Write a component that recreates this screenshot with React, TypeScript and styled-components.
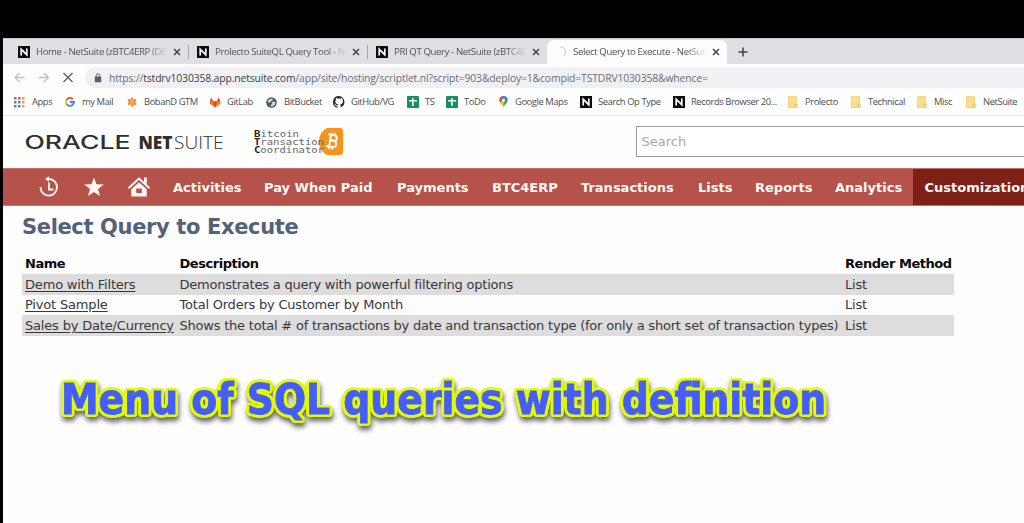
import React from 'react';
import styled, { createGlobalStyle } from 'styled-components';

const Global = createGlobalStyle`
  *, *::before, *::after { box-sizing: border-box; }
  body { margin: 0; background: #000; overflow: hidden; }
`;

const UI = '"Open Sans", "Noto Sans", sans-serif';
const BODY = '"DejaVu Sans", Verdana, sans-serif';

const Screen = styled.div`
  width: 1024px;
  height: 523px;
  padding: 38px 0 0 3px;
  background: #000;
  overflow: hidden;
`;

const Browser = styled.div`
  height: 485px;
  background: #fefefe;
  display: flex;
  flex-direction: column;
  overflow: hidden;
`;

const TabStrip = styled.div`
  flex: none;
  height: 26px;
  display: flex;
  align-items: flex-end;
  background: #dfe0e4;
  border-top: 1px solid #c4c5c8;
  padding-left: 7px;
`;

const Tab = styled.div<{ $active?: boolean; $w: number }>`
  width: ${p => p.$w}px;
  height: 24px;
  display: flex;
  align-items: center;
  padding: 0 7px 1px 8px;
  border-radius: 7px 7px 0 0;
  background: ${p => (p.$active ? '#fdfdfe' : 'transparent')};
`;

const TabTitle = styled.span`
  flex: 1;
  margin: 0 5px 0 6px;
  height: 16px;
  font: 9.6px/16px ${UI};
  letter-spacing: -0.38px;
  color: #505256;
  white-space: nowrap;
  overflow: hidden;
  mask-image: linear-gradient(to right, #000 84%, transparent 100%);
`;

const TabDivider = styled.i`
  width: 1px;
  height: 14px;
  margin: 0 0 5px;
  background: #a3a5aa;
`;

const NewTab = styled.div`
  width: 32px;
  height: 24px;
  display: grid;
  place-items: center;
`;

const Toolbar = styled.div`
  flex: none;
  height: 27px;
  display: flex;
  align-items: center;
  padding-left: 10px;
  background: #fdfdfe;
`;

const NavButton = styled.div<{ $gap: number }>`
  width: 13px;
  height: 13px;
  margin-right: ${p => p.$gap}px;
  svg { display: block; }
`;

const AddressBar = styled.div`
  flex: 1;
  height: 21px;
  display: flex;
  align-items: center;
  padding-left: 9px;
  border-radius: 11px 0 0 11px;
  background: linear-gradient(#f2f2f4 0 50%, #edf1f3 50% 100%);
`;

const Url = styled.span`
  margin-left: 7px;
  font: 10.4px/20px ${UI};
  letter-spacing: -0.15px;
  color: #6c6e72;
  white-space: nowrap;
  b { font-weight: 400; color: #3c3e42; }
`;

const Bookmarks = styled.div`
  flex: none;
  height: 25px;
  display: flex;
  align-items: center;
  border-bottom: 1px solid #e8e8e8;
  padding: 0 0 2px 11px;
`;

const Bookmark = styled.div<{ $w: number; $gap: number }>`
  flex: none;
  width: ${p => p.$w}px;
  display: flex;
  align-items: center;
  gap: ${p => p.$gap}px;
  svg { flex: none; display: block; }
`;

const BookmarkText = styled.span`
  font: 9.4px/16px ${UI};
  letter-spacing: -0.42px;
  color: #4c4e52;
  white-space: nowrap;
`;

const Header = styled.header`
  flex: none;
  height: 52px;
  display: flex;
  align-items: center;
  padding-left: 22px;
`;

const Brand = styled.svg<{ $mr: number }>`
  flex: none;
  margin-right: ${p => p.$mr}px;
`;

const SearchBox = styled.div`
  width: 420px;
  flex: none;
  height: 31px;
  margin-top: -1px;
  border: 1px solid #9b9b9b;
  background: #fff;
  padding-left: 4.5px;
  font: 13px/30px ${BODY};
  color: #a7a7a7;
`;

const Menu = styled.nav`
  flex: none;
  height: 38px;
  display: flex;
  align-items: stretch;
  background: #b5534a;
  border-top: 1px solid #c4736c;
  border-bottom: 1px solid #c4736c;
  padding-left: 35px;
  overflow: hidden;
`;

const MenuIcon = styled.div<{ $w: number }>`
  flex: none;
  width: ${p => p.$w}px;
  display: flex;
  align-items: center;
`;

const MenuItem = styled.div<{ $w: number; $active?: boolean }>`
  flex: none;
  width: ${p => p.$w}px;
  margin: -1px 0;
  padding: 1px 0 0 11.5px;
  background: ${p => (p.$active ? '#7f2017' : 'transparent')};
  color: #fff8f4;
  font: bold 13px/37px ${BODY};
  white-space: nowrap;
`;

const Content = styled.main`
  padding: 8px 0 0 19px;
`;

const Title = styled.h1`
  margin: 0;
  font: bold 21px/26px ${BODY};
  letter-spacing: -0.36px;
  color: #52627a;
  white-space: nowrap;
`;

const Table = styled.div`
  width: 932px;
  margin-top: 14px;
  font: 13px/20px ${BODY};
  color: #383838;
`;

const Row = styled.div<{ $shade?: boolean; $head?: boolean; $h: number }>`
  display: grid;
  grid-template-columns: 154.5px 665.5px 1fr;
  height: ${p => p.$h}px;
  line-height: ${p => p.$h}px;
  padding-left: 3px;
  white-space: nowrap;
  background: ${p => (p.$shade ? '#dddddd' : 'transparent')};
  font-weight: ${p => (p.$head ? 700 : 400)};
  letter-spacing: ${p => (p.$head ? -0.46 : -0.215)}px;
  color: ${p => (p.$head ? '#0a0a0a' : 'inherit')};
`;

const QueryLink = styled.a`
  letter-spacing: -0.18px;
  text-decoration: underline;
  text-underline-offset: 2px;
`;

/* Yellow rim made of shadows on a circle, so it hugs the thickened glyphs. */
const rim = Array.from({ length: 24 }, (_, i) => {
  const a = (i * Math.PI) / 12;
  return `${(Math.cos(a) * 3.1).toFixed(2)}px ${(Math.sin(a) * 3.1).toFixed(2)}px 0 #e2fa05`;
}).join(', ');

const Caption = styled.p`
  margin: 36px 0 0 39px;
  font: bold 42px/56px "DejaVu Sans Condensed", "DejaVu Sans", sans-serif;
  font-stretch: condensed;
  color: #445dfb;
  white-space: nowrap;
  -webkit-text-stroke: 0.8px #445dfb;
  text-shadow: ${rim};
  filter: drop-shadow(1px 4px 2.5px rgba(0, 0, 0, 0.6));
`;

const NLogo = () => (
  <svg width="12" height="12" viewBox="0 0 12 12">
    <rect width="12" height="12" fill="#0b0b0b" />
    <path d="M3.2 9.400V3.300L8.800 8.700V2.600" fill="none" stroke="#fff" strokeWidth="1.700" />
  </svg>
);

const Close = () => (
  <svg width="8" height="8" viewBox="0 0 8 8">
    <path d="M1 1l6 6M7 1L1 7" stroke="#424448" strokeWidth="1.5" />
  </svg>
);

const Spinner = () => (
  <svg width="12" height="12" viewBox="0 0 12 12">
    <path d="M5 1.2A4.9 4.9 0 0 1 9 9.8" fill="none" stroke="#d5d6d9" strokeWidth="1.3" />
  </svg>
);

const AppsIcon = () => {
  const colors = ['#e2574c', '#e2574c', '#e9a13b', '#3f9b5b', '#4a7fd8', '#e9a13b', '#3f9b5b', '#4a7fd8', '#e9a13b'];
  return (
    <svg width="11" height="11" viewBox="0 0 11 11">
      {colors.map((c, i) => (
        <rect key={i} x={(i % 3) * 4} y={Math.floor(i / 3) * 4} width="2.5" height="2.5" fill={c} />
      ))}
    </svg>
  );
};

const GoogleIcon = () => (
  <svg width="10" height="10" viewBox="0 0 10 10" fill="none" strokeWidth="1.8">
    <path d="M8 2.2A4 4 0 0 0 1.6 3" stroke="#e4483b" />
    <path d="M1.6 3a4 4 0 0 0 0 4" stroke="#f3b72c" />
    <path d="M1.6 7A4 4 0 0 0 7.6 8" stroke="#3aa757" />
    <path d="M7.4 8.1A4 4 0 0 0 9 5H5" stroke="#4384ee" />
  </svg>
);

const FlowerIcon = () => (
  <svg width="10" height="10" viewBox="0 0 10 10" fill="#f68d2e">
    {[0, 60, 120, 180, 240, 300].map(a => (
      <ellipse key={a} cx="5" cy="2" rx="1.4" ry="1.8" transform={`rotate(${a} 5 5)`} />
    ))}
    <circle cx="5" cy="5" r="1.3" fill="#f9a050" />
  </svg>
);

const GitLabIcon = () => (
  <svg width="12" height="11" viewBox="0 0 12 11">
    <path d="M2.3.4L.3 6.2 6 10.8l5.7-4.6L9.7.4 8 4.2H4z" fill="#f27a2a" />
    <path d="M4 4.2h4l-2 6.6zM2.3.4L4 4.2H1zM9.7.4L8 4.2h3z" fill="#df4a2c" />
  </svg>
);

const GlobeIcon = () => (
  <svg width="11" height="11" viewBox="0 0 11 11">
    <circle cx="5.5" cy="5.5" r="5.3" fill="#55585c" />
    <path d="M1.500 4.200Q3.500 1 6.500 1.800L6.800 3 5.200 4 4.300 5.200 2.600 5.600zM5.500 5.600l2-1 2 .6-.5 2.300-2.600 2.100-1.800-.4.3-1.400 1.600-.8z" fill="#d9dadb" />
  </svg>
);

const GitHubIcon = () => (
  <svg width="12" height="12" viewBox="0 0 16 16">
    <path
      fill="#26282b"
      d="M8 0a8 8 0 0 0-2.5 15.6c.4.1.5-.2.5-.4v-1.5c-2 .4-2.7-.9-2.9-1.4-.1-.3-.6-1-1-1.2-.4-.2-.9-.7 0-.7.8 0 1.3.7 1.5 1 .9 1.5 2.3 1.1 2.5.9.1-.6.3-1 .6-1.3-1.8-.2-3.6-.9-3.6-3.9 0-.9.3-1.6.8-2.2-.1-.2-.4-1 .1-2.1 0 0 .7-.2 2.2.8a7.500 7.500 0 0 1 4 0c1.500-1 2.200-.8 2.200-.8.4 1.100.2 1.900.1 2.100.5.6.8 1.300.8 2.200 0 3-1.900 3.700-3.700 3.900.3.300.6.800.6 1.500v2.200c0 .2.100.5.600.4A8 8 0 0 0 8 0z"
    />
  </svg>
);

const SheetIcon = () => (
  <svg width="12" height="12" viewBox="0 0 12 12">
    <rect width="12" height="12" rx="1" fill="#159160" />
    <path d="M5.800 2v8M2 4.800h8" stroke="#fff" strokeWidth="1.600" />
  </svg>
);

const PinIcon = () => (
  <svg width="9" height="12" viewBox="0 0 9 12">
    <path d="M4.500 12C4 8.500.3 7.500.3 4.300A4.200 4.200 0 0 1 4.500 0z" fill="#f5b92f" />
    <path d="M4.500 12C5 8.500 8.700 7.500 8.700 4.300A4.200 4.200 0 0 0 4.500 0z" fill="#37a556" />
    <path d="M.3 4.300A4.200 4.200 0 0 1 4.500 0L3 4.500 1 6.300z" fill="#de4d3f" />
    <path d="M4.500 0a4.200 4.200 0 0 1 4 3L5 4.500 2.600 1z" fill="#4284ec" />
    <circle cx="4.500" cy="4.200" r="1.500" fill="#fff" />
  </svg>
);

const FolderIcon = () => (
  <svg width="10" height="12" viewBox="0 0 10 12">
    <path d="M.5.5h8V8.500h1v3H.5z" fill="#fbdf8c" stroke="#f0cd72" strokeWidth=".8" />
    <path d="M6.800 11.200V8.600h1.700" stroke="#e3b757" fill="none" strokeWidth=".8" />
  </svg>
);

type Mark = { label: string; icon: React.ReactNode; w: number; gap: number };

const marks: Mark[] = [
  { label: 'Apps', icon: <AppsIcon />, w: 51, gap: 7 },
  { label: 'my Mail', icon: <GoogleIcon />, w: 62, gap: 7 },
  { label: 'BobanD GTM', icon: <FlowerIcon />, w: 82, gap: 7 },
  { label: 'GitLab', icon: <GitLabIcon />, w: 57, gap: 6 },
  { label: 'BitBucket', icon: <GlobeIcon />, w: 67, gap: 7 },
  { label: 'GitHub/VG', icon: <GitHubIcon />, w: 74, gap: 6 },
  { label: 'TS', icon: <SheetIcon />, w: 39, gap: 6 },
  { label: 'ToDo', icon: <SheetIcon />, w: 53, gap: 6 },
  { label: 'Google Maps', icon: <PinIcon />, w: 81, gap: 7 },
  { label: 'Search Op Type', icon: <NLogo />, w: 93, gap: 6 },
  { label: 'Records Browser 20...', icon: <NLogo />, w: 115, gap: 6 },
  { label: 'Prolecto', icon: <FolderIcon />, w: 63, gap: 7 },
  { label: 'Technical', icon: <FolderIcon />, w: 66, gap: 7 },
  { label: 'Misc', icon: <FolderIcon />, w: 49, gap: 7 },
  { label: 'NetSuite', icon: <FolderIcon />, w: 60, gap: 7 },
];

const menu = [
  { label: 'Activities', w: 91 },
  { label: 'Pay When Paid', w: 133 },
  { label: 'Payments', w: 95 },
  { label: 'BTC4ERP', w: 89 },
  { label: 'Transactions', w: 117 },
  { label: 'Lists', w: 57 },
  { label: 'Reports', w: 80 },
  { label: 'Analytics', w: 89.500 },
];

const rows = [
  { name: 'Demo with Filters', text: 'Demonstrates a query with powerful filtering options', h: 21 },
  { name: 'Pivot Sample', text: 'Total Orders by Customer by Month', h: 20 },
  {
    name: 'Sales by Date/Currency',
    text: 'Shows the total # of transactions by date and transaction type (for only a short set of transaction types)',
    h: 21,
  },
];

export default function App() {
  return (
    <Screen>
      <Global />
      <Browser>
        <TabStrip>
          <Tab $w={178}><NLogo /><TabTitle>Home - NetSuite (zBTC4ERP (DEV</TabTitle><Close /></Tab>
          <TabDivider />
          <Tab $w={178}><NLogo /><TabTitle>Prolecto SuiteQL Query Tool - NetS</TabTitle><Close /></Tab>
          <TabDivider />
          <Tab $w={179}><NLogo /><TabTitle>PRI QT Query - NetSuite (zBTC4ER</TabTitle><Close /></Tab>
          <Tab $w={180} $active><Spinner /><TabTitle>Select Query to Execute - NetSuite</TabTitle><Close /></Tab>
          <NewTab>
            <svg width="10" height="10" viewBox="0 0 10 10">
              <path d="M5 .5v9M.5 5h9" stroke="#3f4145" strokeWidth="1.500" />
            </svg>
          </NewTab>
        </TabStrip>

        <Toolbar>
          <NavButton $gap={12}>
            <svg width="13" height="13" viewBox="0 0 13 13" fill="none" stroke="#bfc0c2" strokeWidth="1.300">
              <path d="M11.500 6.500H2M6.500 2L2 6.500 6.500 11" />
            </svg>
          </NavButton>
          <NavButton $gap={11}>
            <svg width="13" height="13" viewBox="0 0 13 13" fill="none" stroke="#bfc0c2" strokeWidth="1.300">
              <path d="M1 6.500h9.500M6 2l4.500 4.500L6 11" />
            </svg>
          </NavButton>
          <NavButton $gap={10}>
            <svg width="13" height="13" viewBox="0 0 13 13">
              <path d="M1.500 2l9 9M10.500 2l-9 9" stroke="#606266" strokeWidth="1.400" />
            </svg>
          </NavButton>
          <AddressBar>
            <svg width="8" height="10" viewBox="0 0 8 10">
              <rect x=".8" y="3.600" width="6.400" height="5.600" rx=".6" fill="#5c5e61" />
              <path d="M2.300 4V2.400a1.700 1.700 0 0 1 3.400 0V4" fill="none" stroke="#5c5e61" />
            </svg>
            <Url>
              https://<b>tstdrv1030358.app.netsuite.com</b>
              /app/site/hosting/scriptlet.nl?script=903&amp;deploy=1&amp;compid=TSTDRV1030358&amp;whence=
            </Url>
          </AddressBar>
        </Toolbar>

        <Bookmarks>
          {marks.map(m => (
            <Bookmark key={m.label} $w={m.w} $gap={m.gap}>
              {m.icon}
              <BookmarkText>{m.label}</BookmarkText>
            </Bookmark>
          ))}
        </Bookmarks>

        <Header>
          <Brand $mr={29.5} width="199" height="20" viewBox="0 0 199 20">
            <text x="-0.500" y="16.500" textLength="106" lengthAdjust="spacingAndGlyphs" fill="#2f2f2f" fontSize="18" fontFamily="Inter, sans-serif" fontWeight="500">ORACLE</text>
            <g fill="#2f2f2f" fontFamily='"Open Sans", sans-serif' fontSize="18">
              <text x="113.500" y="16.500" textLength="34" lengthAdjust="spacingAndGlyphs" fontWeight="800">NET</text>
              <text x="149" y="16.500" textLength="49.500" lengthAdjust="spacingAndGlyphs" fontWeight="300">SUITE</text>
            </g>
          </Brand>
          <Brand $mr={293.5} width="89" height="30" viewBox="0 0 89 30">
            <path d="M73 1h13a3 3 0 0 1 3 3v21a3 3 0 0 1-3 3H73q-8-4-8-13.500T73 1z" fill="#f7931e" />
            <g transform="rotate(10 78.500 14)" fill="none" stroke="#fff" strokeWidth="2">
              <path d="M76 8v12M73 8h6.500a2.700 2.700 0 0 1 0 5.600H76M79.500 13.600a3.200 3.200 0 0 1 0 6.400H73" />
              <path d="M76.500 5.500V8M79.500 5.500V8M76.500 20v2.500M79.500 20v2.500" strokeWidth="1.500" />
            </g>
            <g fontFamily='"DejaVu Sans Mono", monospace' fontSize="9" fill="#666">
              <text x="0" y="9.700" textLength="45" lengthAdjust="spacingAndGlyphs"><tspan fontWeight="700" fill="#222">B</tspan>itcoin</text>
              <text x="0" y="18" textLength="70" lengthAdjust="spacingAndGlyphs"><tspan fontWeight="700" fill="#222">T</tspan>ransaction</text>
              <text x="0" y="26.300" textLength="70" lengthAdjust="spacingAndGlyphs"><tspan fontWeight="700" fill="#222">C</tspan>oordinator</text>
            </g>
          </Brand>
          <SearchBox>Search</SearchBox>
        </Header>

        <Menu>
          <MenuIcon $w={45}>
            <svg width="22" height="22" viewBox="0 0 22 22" fill="none" stroke="#fff4ee" strokeWidth="1.900">
              <path d="M10 3H11A8.300 8.300 0 1 1 2.500 12.500" />
              <path d="M11 6.500v7h4.500" />
              <path d="M7 3l4-2.700v5.400z" fill="#fff4ee" stroke="none" />
              <path d="M1 11.200h3v2.200z" fill="#fff4ee" stroke="none" />
            </svg>
          </MenuIcon>
          <MenuIcon $w={45}>
            <svg width="22" height="22" viewBox="0 0 22 22" fill="#fff8f4">
              <path d="M11 1.500l2.500 6.800 7.300.2-5.800 4.500 2 7L11 15.900 5 20l2-7L1.200 8.500l7.300-.2z" />
            </svg>
          </MenuIcon>
          <MenuIcon $w={33.5}>
            <svg width="24" height="22" viewBox="0 0 24 22">
              <path d="M.500 12.200L11 2.500 21.500 12.200" fill="none" stroke="#fff8f4" strokeWidth="1.900" />
              <path d="M16 1.500h2.800v7L16 6z" fill="#fff8f4" />
              <path fillRule="evenodd" d="M11 6.200l7.700 7V20.500H3.300v-7.300zM8.200 12.500v4.500h5.600v-4.500z" fill="#fff8f4" />
            </svg>
          </MenuIcon>
          {menu.map(m => <MenuItem key={m.label} $w={m.w}>{m.label}</MenuItem>)}
          <MenuItem $w={130} $active>Customization</MenuItem>
        </Menu>

        <Content>
          <Title>Select Query to Execute</Title>
          <Table>
            <Row $head $h={20}><span>Name</span><span>Description</span><span>Render Method</span></Row>
            {rows.map((r, i) => (
              <Row key={r.name} $h={r.h} $shade={i % 2 === 0}>
                <div><QueryLink>{r.name}</QueryLink></div>
                <span>{r.text}</span>
                <span>List</span>
              </Row>
            ))}
          </Table>
          <Caption>Menu of SQL queries with definition</Caption>
        </Content>
      </Browser>
    </Screen>
  );
}
